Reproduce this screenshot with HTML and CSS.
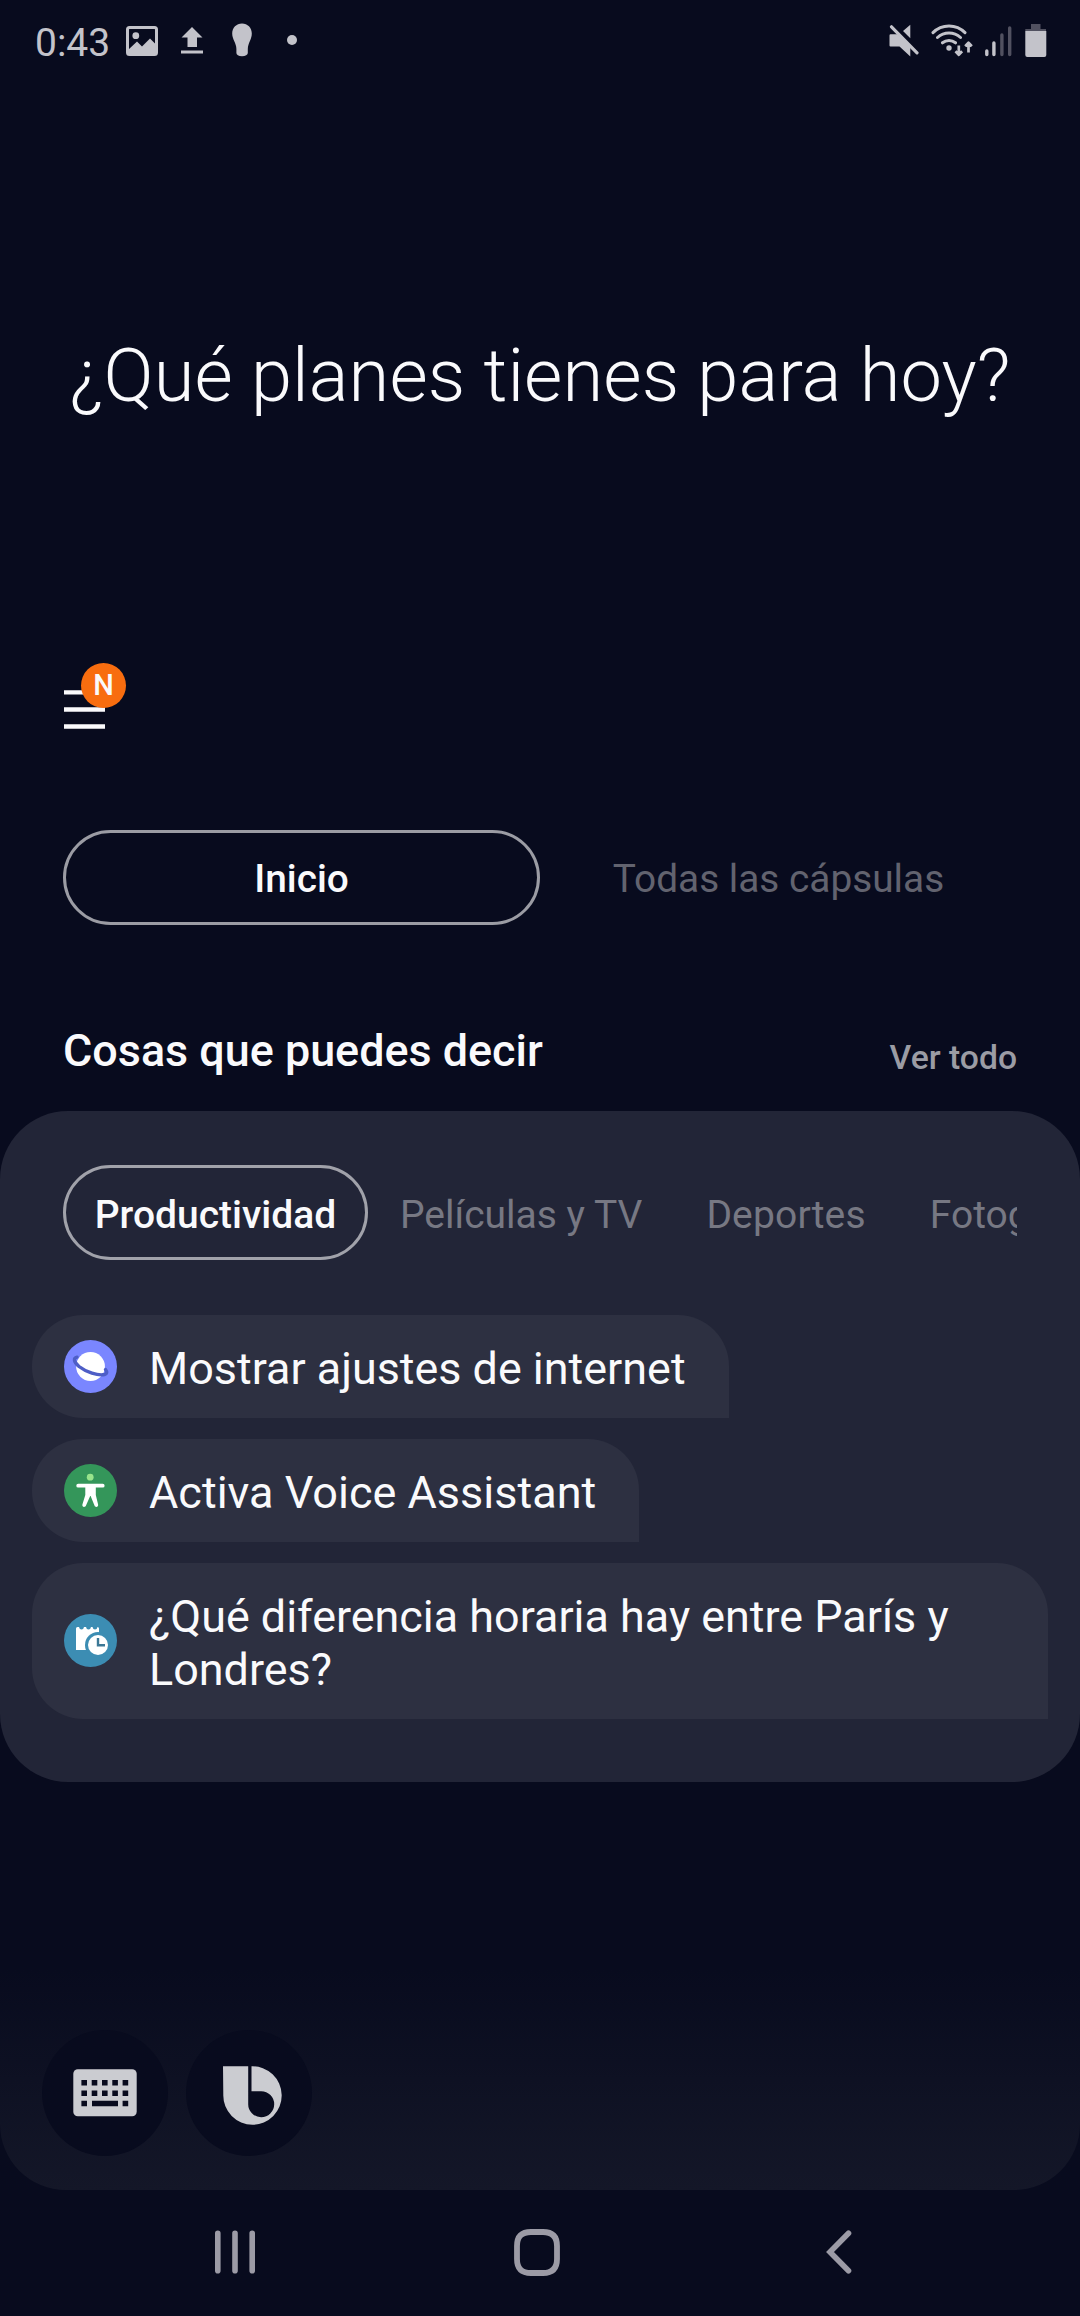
FILE: index.html
```html
<!DOCTYPE html>
<html lang="es">
<head>
<meta charset="utf-8">
<title>Bixby</title>
<link rel="stylesheet" href="styles.css">
</head>
<body>
<div class="screen">
  <header class="status">
    <span class="clock">0:43</span>
    <svg class="st-image" width="32" height="30" viewBox="0 0 32 30"><rect x="1.5" y="1.5" width="29" height="27" rx="2" fill="none" stroke="currentColor" stroke-width="3"/><circle cx="9.8" cy="9.7" r="3.4" fill="currentColor"/><path d="M2 24l9-8.500 5 5 8-8 6 6V29H2z" fill="currentColor"/></svg>
    <svg class="st-upload" width="22" height="27" viewBox="0 0 22 27"><path d="M11 0l10.500 10.500H16V20H6.500V10.500H.5zM0 23.500h22v3H0z" fill="currentColor"/></svg>
    <svg class="st-bulb" width="20" height="34" viewBox="0 0 20 34"><path d="M10 .5c5.600 0 9.800 4.300 9.800 10 0 6-4 9.500-4 15.500V30c0 2-2.300 3.200-5.800 3.200S4.400 32 4.400 30v-4C4.400 20 .2 16.500.2 10.500.2 4.800 4.400.5 10 .5z" fill="currentColor"/></svg>
    <span class="st-dot"></span>
    <div class="status-right">
      <svg width="30" height="34" viewBox="0 0 30 34"><path d="M1.500 10.300H8L21.300 22v10.500L10.500 22.500h-9q-1 0-1-1v-10q0-1.200 1-1.200zM21.300.8v13.400L14 7z" fill="currentColor"/><path d="M2.500 2.800l25.500 26" stroke="currentColor" stroke-width="3.200" stroke-linecap="round"/></svg>
      <svg width="42" height="34" viewBox="0 0 42 34"><g fill="none" stroke="currentColor" stroke-width="3" stroke-linecap="round"><path d="M2 8.600a22.500 22.500 0 0 1 32 0M6.500 13.500a17 17 0 0 1 23 0M11.500 18.800a10.500 10.500 0 0 1 13 0"/></g><circle cx="18" cy="24" r="2.700" fill="currentColor"/><path d="M27.800 21.500v9M24.500 27.300l3.300 3.500 3.300-3.500M37.500 28.500v-9M34.200 22.300l3.300-3.500 3.300 3.500" fill="none" stroke="currentColor" stroke-width="2.700" stroke-linejoin="round"/></svg>
      <svg width="28" height="34" viewBox=".8 0 28 34"><path d="M2.600 27v3.500M9.700 19v11.500" stroke="currentColor" stroke-width="3.400" stroke-linecap="round"/><path d="M17.700 11v19.500M25.500 4v26.500" stroke="#515160" stroke-width="3.400" stroke-linecap="round"/></svg>
      <svg width="22" height="34" viewBox="0 0 22 34"><path d="M6 0h9.500v5H21v2H.3V5H6z" fill="#515160"/><path d="M.3 7h21v24q0 2-2 2h-17q-2 0-2-2z" fill="currentColor"/></svg>
    </div>
  </header>

  <h1 class="greeting">¿Qué planes tienes para hoy?</h1>

  <div class="menu">
    <svg width="41" height="39" viewBox="0 0 41 39"><path d="M0 2.400h41M0 19.500h41M0 36.500h41" stroke="#fafafc" stroke-width="4.400"/></svg>
    <span class="badge">N</span>
  </div>

  <nav class="tabs">
    <span class="tab tab-active">Inicio</span>
    <span class="tab">Todas las cápsulas</span>
  </nav>

  <div class="section-head">
    <h2 class="section-title">Cosas que puedes decir</h2>
    <span class="see-all">Ver todo</span>
  </div>

  <section class="panel">
    <div class="chips">
      <span class="chip chip-active">Productividad</span>
      <span class="chip">Películas y TV</span>
      <span class="chip chip-sports">Deportes</span>
      <span class="chip">Fotografía</span>
    </div>
    <div class="bubbles">
      <div class="bubble">
        <svg class="app" viewBox="0 0 53 53"><circle cx="26.500" cy="26.500" r="26.500" fill="#7a86ff"/><circle cx="26.500" cy="26.500" r="14.400" fill="#fff"/><path d="M13 17.200C9 18 9.700 22 15 26.500 22 32 34 36 40.500 34.500c3-.8 2.500-3 1-5" fill="none" stroke="#4e5ec6" stroke-width="3.400" stroke-linecap="round"/></svg>
        <span class="phrase">Mostrar ajustes de internet</span>
      </div>
      <div class="bubble bubble-voice">
        <svg class="app" viewBox="0 0 53 53"><circle cx="26.500" cy="26.500" r="26.500" fill="#34965a"/><circle cx="26.200" cy="13.200" r="3.400" fill="#98e48c"/><path d="M14.200 21.700h24.500M26.300 22v8" stroke="#fff" stroke-width="3.800" stroke-linecap="round"/><path d="M21.300 21h10.500v10l2.300 9.500c.6 2.600-2.800 3.400-3.600 1L26.400 31.500 22 41.500c-1 2.400-4.200 1.600-3.600-1L21.300 31z" fill="#fff"/></svg>
        <span class="phrase">Activa Voice Assistant</span>
      </div>
      <div class="bubble bubble-tall">
        <svg class="app" viewBox="0 0 53 53"><circle cx="26.500" cy="26.500" r="26.500" fill="#3c8db3"/><path d="M12 14.500q0-1.500 1.500-1.500H15q.5 2.500 2.500 2.500T20 13h2q.5 2.500 2.500 2.500T27 13h1.500q.5 2.500 2.500 2.500T33.500 13q1.500 0 1.500 1.500V36H12z" fill="#fff"/><circle cx="34" cy="31" r="13" fill="#3c8db3"/><circle cx="34" cy="31" r="10" fill="#fff"/><path d="M34 24v7.200h7" fill="none" stroke="#3c7896" stroke-width="2.400"/></svg>
        <span class="phrase">¿Qué diferencia horaria hay entre París y Londres?</span>
      </div>
    </div>
  </section>

  <footer class="dock">
    <span class="round"><svg width="64" height="48" viewBox="0 0 64 48"><rect x=".3" y=".3" width="63.400" height="47" rx="4.500" fill="#cbccd1"/><path d="M8.400 13.800h47M8.400 24.200h47" stroke="#080b1e" stroke-width="5.600" stroke-dasharray="5.600 4.700"/><path d="M8.400 34.500H14M19 34.500h26M49.600 34.500h5.600" stroke="#080b1e" stroke-width="5.600"/></svg></span>
    <span class="round"><svg class="bixby" width="59" height="59" viewBox="0 0 59 59"><path d="M0 .3H25.200V38A13 13 0 1 0 38.200 25.200H28.500V.3A29.200 29.200 0 1 1 .3 29z" fill="#cbccd1"/></svg></span>
  </footer>

  <nav class="system">
    <svg width="42" height="44" viewBox="0 0 42 44"><path d="M3.800 3.300v37.400M21 3.300v37.400M38.200 3.300v37.400" stroke="#9c9ba6" stroke-width="5.600" stroke-linecap="round"/></svg>
    <svg width="46" height="47" viewBox="0 0 46 47"><path d="M17 3h12q14 0 14 14v13q0 14-14 14H17Q3 44 3 30V17Q3 3 17 3z" fill="none" stroke="#9c9ba6" stroke-width="5.800"/></svg>
    <svg width="26" height="44" viewBox="0 0 26 44"><path d="M22.500 3.300L4 22l18.500 18.700" fill="none" stroke="#9c9ba6" stroke-width="5.600" stroke-linecap="round"/></svg>
  </nav>
</div>
</body>
</html>
```
FILE: styles.css
```css
* { box-sizing: border-box; }
body { margin: 0; background: #080b1e; font-family: Roboto, "Liberation Sans", sans-serif; color: #fafafc; }
svg { display: block; flex: none; }
h1, h2 { margin: 0; }

.screen { width: 1080px; height: 2316px; display: flex; flex-direction: column; overflow: hidden; }

.status { height: 80px; padding: 0 33px 0 35px; display: flex; align-items: center; color: #c3c3ca; }
.clock { font-size: 39px; line-height: 46px; width: 91px; padding-top: 6px; }
.st-image { margin-top: 1px; }
.st-upload { margin-left: 23px; }
.st-bulb { margin-left: 29px; }
.st-dot { width: 10px; height: 10px; border-radius: 50%; background: currentColor; margin-left: 35px; }
.status-right { margin: 1px 0 0 auto; display: flex; gap: 12px; }

.greeting { margin-top: 252px; font-size: 74px; line-height: 88px; font-weight: 300; letter-spacing: .1px; text-align: center; white-space: nowrap; }

.menu { position: relative; width: 41px; height: 39px; margin: 270px 0 0 64px; }
.badge { position: absolute; left: 17px; top: -27px; width: 45px; height: 45px; border-radius: 50%; background: #f86d0f; font-size: 29px; font-weight: 500; line-height: 45px; text-align: center; }

.tabs { margin: 101px 63px 0; display: grid; grid-template-columns: 1fr 1fr; }
.tab { height: 95px; border: 3px solid transparent; border-radius: 48px; display: flex; align-items: center; justify-content: center; font-size: 38.8px; line-height: 46px; color: #62636f; padding-top: 3px; }
.tab-active { border-color: #9b9ca4; color: #fafafc; font-weight: 500; }

.section-head { margin: 100px 63px 0; display: flex; justify-content: space-between; align-items: flex-end; }
.section-title { font-size: 44.9px; line-height: 52px; font-weight: 500; }
.see-all { font-size: 33.7px; line-height: 40px; margin-bottom: -1px; font-weight: 500; color: #9b9ca4; }

.panel { margin-top: 34px; height: 671px; padding: 54px 32px 0; border-radius: 68px; background: #222537; }
.chips { margin: 0 31px; display: flex; overflow: hidden; }
.chip { flex: none; height: 95px; border: 3px solid transparent; border-radius: 48px; padding: 5px 29px 0; display: flex; align-items: center; font-size: 39px; color: #777883; }
.chip-sports { letter-spacing: .15px; }
.chip-active { width: 305px; padding: 5px 0 0; justify-content: center; border-color: #a1a2aa; color: #fafafc; font-weight: 500; }
.bubbles { margin-top: 55px; display: flex; flex-direction: column; align-items: flex-start; gap: 21px; }
.bubble { display: flex; align-items: center; gap: 32px; padding: 25px 43px 25px 32px; border-radius: 51px 51px 0 51px; background: #2d3041; font-size: 44.9px; line-height: 53px; }
.bubble-voice { font-size: 45px; }
.phrase { padding-top: 2px; margin-bottom: -2px; }
.bubble-tall .app { margin-bottom: 1px; }
.app { width: 53px; height: 53px; }

.dock { margin-top: 188px; height: 220px; padding: 60px 42px 0; display: flex; gap: 18px; border-radius: 0 0 66px 66px; background: linear-gradient(#080b1e, #141728); }
.round { width: 126px; height: 126px; border-radius: 50%; background: #080b1e; display: flex; align-items: center; justify-content: center; }
.bixby { margin: 5px 0 0 6px; }

.system { height: 126px; padding: 0 90px 2px 84px; display: grid; grid-template-columns: repeat(3, 302px); align-items: center; justify-items: center; }
```
